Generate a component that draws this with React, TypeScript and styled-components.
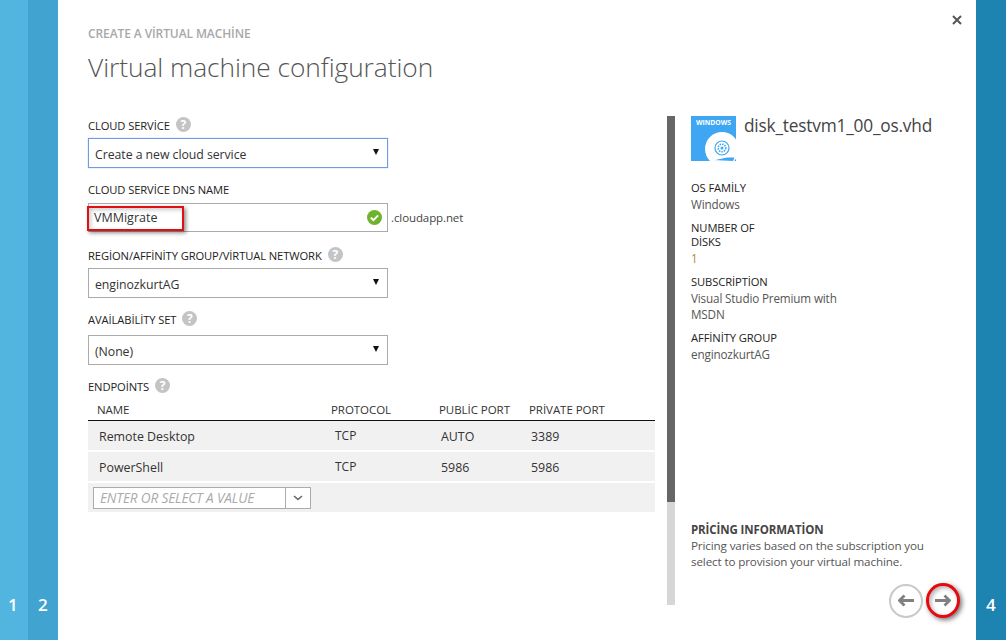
import React from "react";
import styled, { createGlobalStyle } from "styled-components";

const Global = createGlobalStyle`
  html, body { margin: 0; padding: 0; background: #fff; }
  body { font-family: "Open Sans", "Noto Sans", sans-serif; color: #333; }
  * { box-sizing: border-box; }
`;

const Page = styled.div`
  width: 1006px; height: 640px; display: flex; overflow: hidden; position: relative;
`;
const Strip = styled.div<{ $bg: string; $w: number; $pl: number }>`
  width: ${p => p.$w}px; background: ${p => p.$bg}; color: #fff; font-weight: 600; font-size: 17px;
  line-height: 20px; display: flex; align-items: flex-end; padding: 0 0 25px ${p => p.$pl}px; flex: none;
  font-family: "Open Sans", sans-serif;
`;
const Main = styled.main`
  flex: 1; position: relative; display: flex; flex-direction: column; padding: 26px 0 0 30px; background: #fff;
`;
const Crumb = styled.div`
  font-size: 12px; font-weight: 600; color: #a8a8a8; line-height: 16px; letter-spacing: -0.1px;
`;
const Title = styled.h1`
  margin: 6px 0 0; font-weight: 300; font-size: 26.3px; line-height: 38px; color: #555; letter-spacing: -0.05px;
`;
const Close = styled.button`
  position: absolute; top: 13px; right: 13px; width: 12px; height: 14px; padding: 0; border: 0; background: none;
  color: #555; display: flex; align-items: center; justify-content: center;
`;
const Columns = styled.div`
  display: flex; margin-top: 30px;
`;
const Form = styled.form`
  width: 567px; flex: none;
`;
const LabelRow = styled.div`
  display: flex; align-items: center; gap: 6px; height: 20px; font-size: 11.2px; font-weight: 400; color: #222;
  letter-spacing: -0.1px; padding-bottom: 2px;
`;
const Help = styled.span`
  width: 15px; height: 15px; border-radius: 50%; background: #c4c4c4; color: #fff; font-size: 12px; font-weight: 700;
  display: inline-flex; align-items: center; justify-content: center; margin-top: -2px;
`;
const FieldGroup = styled.div<{ $gap: number }>`
  margin-bottom: ${p => p.$gap}px;
`;
const Select = styled.div<{ $focus?: boolean; $top?: number }>`
  width: 300px; height: 30px; margin-top: ${p => p.$top ?? 2}px; display: flex; align-items: center; justify-content: space-between;
  padding: 2px 8px 0 6px; font-size: 12.3px; color: #333; background: #fff;
  border: 1px solid ${p => (p.$focus ? "#6d9ce0" : "#ababab")};
  box-shadow: ${p => (p.$focus ? "0 0 1px #8ab0ea" : "none")};
  font-family: "Open Sans", sans-serif; letter-spacing: -0.05px;
`;
const Caret = styled.span`
  width: 0; height: 0; border-left: 3.5px solid transparent; border-right: 3.5px solid transparent; border-top: 6px solid #111;
  margin-top: -5px;
`;
const DnsRow = styled.div`
  display: flex; align-items: center; margin-top: 3px;
`;
const TextBox = styled.div`
  width: 300px; height: 29px; border: 1px solid #ababab; display: flex; align-items: center; justify-content: space-between;
  padding: 0 5px 0 5px; font-size: 12.5px; color: #333; position: relative;
`;
const Suffix = styled.span`
  font-size: 11.5px; color: #444; margin-left: 3px; letter-spacing: -0.1px;
`;
const RedBox = styled.span`
  position: absolute; left: -2px; top: 2px; width: 97px; height: 25px; border: 2.5px solid #e00f12;
  box-shadow: 2px 2px 4px rgba(0,0,0,.45), inset 2px 2px 4px rgba(0,0,0,.2);
`;
const Table = styled.div`
  margin-top: 6px; display: flex; flex-direction: column; gap: 2px;
`;
const HeadRow = styled.div`
  display: grid; grid-template-columns: 9px 234px 108px 90px 1fr; height: 19px; border-bottom: 2px solid #111; font-size: 11.5px; font-weight: 400;
  color: #333; line-height: 14px; margin-bottom: -3px; letter-spacing: -0.05px;
`;
const BodyRow = styled.div`
  display: grid; grid-template-columns: 11px 236px 106px 90px 1fr; height: 29px; background: #f1f1f1; align-items: center;
  font-size: 12.4px; color: #333; padding-top: 2px;
`;
const TcpCell = styled.span`
  font-size: 12px; margin-top: -3px;
`;
const InputRow = styled.div`
  height: 29px; background: #f1f1f1; display: flex; align-items: center; padding-left: 5px;
`;
const Combo = styled.div`
  width: 218px; height: 22px; border: 1px solid #ababab; background: #fff; display: flex; align-items: center;
`;
const ComboText = styled.span`
  flex: 1; padding-left: 6px; font-style: italic; font-size: 13.6px; color: #aaa; letter-spacing: -0.15px; white-space: nowrap;
`;
const ComboBtn = styled.span`
  width: 25px; height: 20px; border-left: 1px solid #ababab; display: flex; align-items: center; justify-content: center; color: #666; flex: none;
`;
const Side = styled.aside`
  margin-left: 12px; width: 300px; height: 489px; display: flex;
`;
const Scroll = styled.div`
  width: 8px; flex: none; background: #d6d6d6; height: 100%; position: relative;
`;
const Thumb = styled.div`
  position: absolute; left: 0; top: 0; width: 8px; height: 386px; background: #666;
`;
const SideBody = styled.div`
  margin-left: 16px; flex: 1; display: flex; flex-direction: column; height: 100%;
`;
const DiskHead = styled.div`
  display: flex; gap: 8px;
`;
const DiskName = styled.div`
  font-size: 17.3px; line-height: 20px; color: #444; letter-spacing: -0.2px; white-space: nowrap;
`;
const Info = styled.dl`
  margin: 20px 0 0; width: 150px;
`;
const Term = styled.dt`
  font-size: 11.2px; font-weight: 400; color: #222; line-height: 14px; letter-spacing: -0.1px;
`;
const Desc = styled.dd<{ $accent?: boolean }>`
  margin: 1px 0 9px; font-size: 11.7px; line-height: 16px; color: ${p => (p.$accent ? "#b9853e" : "#555")}; letter-spacing: -0.15px;
`;
const Pricing = styled.div`
  margin-top: auto; margin-bottom: 35px; width: 250px;
`;
const PriceTitle = styled.div`
  font-size: 11.5px; font-weight: 700; color: #444; line-height: 16px; letter-spacing: -0.1px;
`;
const PriceText = styled.div`
  font-size: 11.65px; line-height: 16px; color: #555; letter-spacing: -0.13px;
`;
const Nav = styled.div`
  position: absolute; left: 831px; top: 583px; display: flex; align-items: center; gap: 3px;
`;
const NavBtn = styled.button<{ $hot?: boolean }>`
  width: 34px; height: ${p => (p.$hot ? 35 : 34)}px; border-radius: 50%; padding: 0; background: #fff; color: #808080; display: flex; align-items: center; justify-content: center;
  border: ${p => (p.$hot ? "3px solid #e40b0e" : "2px solid #c9c9c9")};
  box-shadow: ${p => (p.$hot ? "2px 2px 5px rgba(0,0,0,.55), inset 2px 2px 4px rgba(0,0,0,.3)" : "none")};
`;

const HelpMark = () => <Help>?</Help>;
const Arrow = ({ dir }: { dir: "l" | "r" }) => (
  <svg width="16" height="13" viewBox="0 0 16 13" fill="none" stroke="currentColor" strokeWidth="2.8">
    {dir === "r" ? <path d="M0 6.5h14M9.5 1.5l5 5-5 5" /> : <path d="M16 6.5H2M6.5 1.5l-5 5 5 5" />}
  </svg>
);
const DiskIcon = () => (
  <svg width="45" height="45" viewBox="0 0 45 45">
    <rect width="45" height="45" fill="#3ea6f3" />
    <circle cx="31" cy="33" r="17" fill="#fff" />
    <circle cx="31" cy="32" r="7" fill="none" stroke="#3ea6f3" strokeWidth="1.2" />
    <circle cx="31" cy="32" r="3.8" fill="none" stroke="#3ea6f3" strokeWidth="1.6" strokeDasharray="1.5 1" />
    <circle cx="31" cy="32" r="1.5" fill="#3ea6f3" />
    <path d="M22 44l14-3h6.5q2 0 1 2l-1 2" fill="#3ea6f3" stroke="#fff" strokeWidth="1" />
    <text x="22.5" y="8.5" textAnchor="middle" fill="#fff" fontSize="6.8" fontWeight="700" fontFamily="Open Sans, sans-serif">WINDOWS</text>
  </svg>
);
const Check = () => (
  <svg width="15" height="15" viewBox="0 0 15 15">
    <circle cx="7.5" cy="7.5" r="7.5" fill="#6fb22c" />
    <path d="M3.8 7.6l2.6 2.6 4.8-4.8" fill="none" stroke="#fff" strokeWidth="2" />
  </svg>
);

const rows = [
  { name: "Remote Desktop", proto: "TCP", pub: "AUTO", priv: "3389" },
  { name: "PowerShell", proto: "TCP", pub: "5986", priv: "5986" },
];

export default function App() {
  return (
    <Page>
      <Global />
      <Strip $bg="#52b5e0" $w={28} $pl={8}>1</Strip>
      <Strip $bg="#41a3cf" $w={30} $pl={10}>2</Strip>
      <Main>
        <Close aria-label="close">
          <svg width="10" height="10" viewBox="0 0 10 10" stroke="currentColor" strokeWidth="2"><path d="M1 1l8 8M9 1l-8 8" /></svg>
        </Close>
        <Crumb>CREATE A VİRTUAL MACHİNE</Crumb>
        <Title>Virtual machine configuration</Title>
        <Columns>
          <Form>
            <FieldGroup $gap={12}>
              <LabelRow>CLOUD SERVİCE <HelpMark /></LabelRow>
              <Select $focus>Create a new cloud service<Caret /></Select>
            </FieldGroup>
            <FieldGroup $gap={14}>
              <LabelRow>CLOUD SERVİCE DNS NAME</LabelRow>
              <DnsRow>
                <TextBox>VMMigrate<Check /><RedBox /></TextBox>
                <Suffix>.cloudapp.net</Suffix>
              </DnsRow>
            </FieldGroup>
            <FieldGroup $gap={12}>
              <LabelRow>REGİON/AFFİNİTY GROUP/VİRTUAL NETWORK <HelpMark /></LabelRow>
              <Select>enginozkurtAG<Caret /></Select>
            </FieldGroup>
            <FieldGroup $gap={12}>
              <LabelRow>AVAİLABİLİTY SET <HelpMark /></LabelRow>
              <Select $top={5}>(None)<Caret /></Select>
            </FieldGroup>
            <LabelRow>ENDPOİNTS <HelpMark /></LabelRow>
            <Table>
              <HeadRow>
                <span /><span>NAME</span><span>PROTOCOL</span><span>PUBLİC PORT</span><span>PRİVATE PORT</span>
              </HeadRow>
              {rows.map(r => (
                <BodyRow key={r.name}>
                  <span /><span>{r.name}</span><TcpCell>{r.proto}</TcpCell><span>{r.pub}</span><span>{r.priv}</span>
                </BodyRow>
              ))}
              <InputRow>
                <Combo>
                  <ComboText>ENTER OR SELECT A VALUE</ComboText>
                  <ComboBtn>
                    <svg width="10" height="6" viewBox="0 0 10 6" fill="none" stroke="currentColor" strokeWidth="1.6"><path d="M1 1l4 3.5L9 1" /></svg>
                  </ComboBtn>
                </Combo>
              </InputRow>
            </Table>
          </Form>
          <Side>
            <Scroll><Thumb /></Scroll>
            <SideBody>
              <DiskHead>
                <DiskIcon />
                <DiskName>disk_testvm1_00_os.vhd</DiskName>
              </DiskHead>
              <Info>
                <Term>OS FAMİLY</Term>
                <Desc>Windows</Desc>
                <Term>NUMBER OF<br />DİSKS</Term>
                <Desc $accent>1</Desc>
                <Term>SUBSCRİPTİON</Term>
                <Desc>Visual Studio Premium with MSDN</Desc>
                <Term>AFFİNİTY GROUP</Term>
                <Desc>enginozkurtAG</Desc>
              </Info>
              <Pricing>
                <PriceTitle>PRİCİNG INFORMATİON</PriceTitle>
                <PriceText>Pricing varies based on the subscription you select to provision your virtual machine.</PriceText>
              </Pricing>
            </SideBody>
          </Side>
        </Columns>
        <Nav>
          <NavBtn aria-label="back"><Arrow dir="l" /></NavBtn>
          <NavBtn $hot aria-label="next"><Arrow dir="r" /></NavBtn>
        </Nav>
      </Main>
      <Strip $bg="#1d83b0" $w={30} $pl={10}>4</Strip>
    </Page>
  );
}
